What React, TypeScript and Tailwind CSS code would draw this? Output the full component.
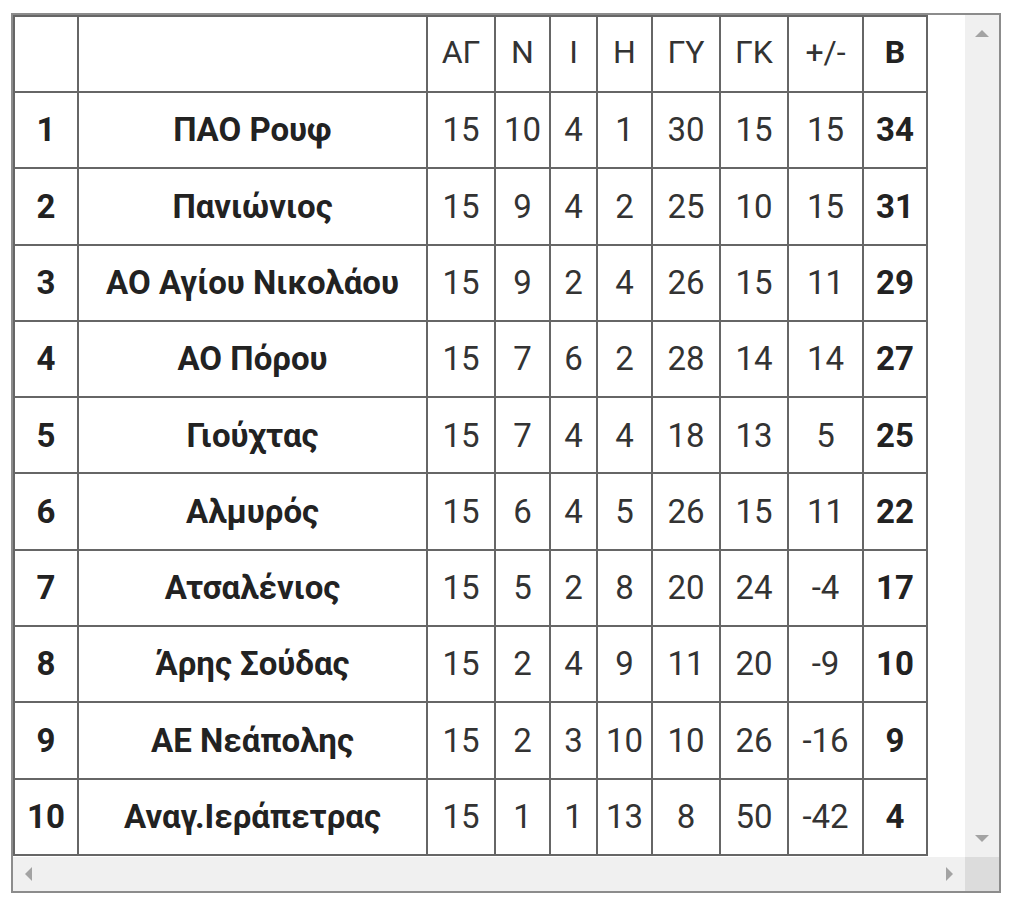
const rows = [
  [1, "ΠΑΟ Ρουφ", 15, 10, 4, 1, 30, 15, 15, 34],
  [2, "Πανιώνιος", 15, 9, 4, 2, 25, 10, 15, 31],
  [3, "ΑΟ Αγίου Νικολάου", 15, 9, 2, 4, 26, 15, 11, 29],
  [4, "ΑΟ Πόρου", 15, 7, 6, 2, 28, 14, 14, 27],
  [5, "Γιούχτας", 15, 7, 4, 4, 18, 13, 5, 25],
  [6, "Αλμυρός", 15, 6, 4, 5, 26, 15, 11, 22],
  [7, "Ατσαλένιος", 15, 5, 2, 8, 20, 24, -4, 17],
  [8, "Άρης Σούδας", 15, 2, 4, 9, 11, 20, -9, 10],
  [9, "ΑΕ Νεάπολης", 15, 2, 3, 10, 10, 26, -16, 9],
  [10, "Αναγ.Ιεράπετρας", 15, 1, 1, 13, 8, 50, -42, 4],
]

const heads = ["ΑΓ", "Ν", "Ι", "Η", "ΓΥ", "ΓΚ", "+/-"]
const widths = [64, 349, 68, 55, 47, 55, 68, 68, 75, 64]

export default function App() {
  return (
    <div className="w-[1024px] h-[906px] bg-white pt-[13px] pl-[11px]" style={{ fontFamily: "Roboto, 'Liberation Sans', sans-serif" }}>
      <div className="w-[990px] h-[880px] border-2 border-[#8c8c8c] grid grid-cols-[952px_34px] grid-rows-[842px_34px]">
        {/* content */}
        <div className="overflow-hidden bg-white">
          <table className="table-fixed border-collapse w-[914px]">
            <colgroup>
              {widths.map((w, i) => (
                <col key={i} style={{ width: w }} />
              ))}
            </colgroup>
            <thead>
              <tr className="h-[76px]">
                <th className="border-2 border-[#666]"></th>
                <th className="border-2 border-[#666]"></th>
                {heads.map((h) => (
                  <th key={h} className="border-2 border-[#666] pb-[5px] text-[32px] font-normal text-[#333] text-center">
                    {h}
                  </th>
                ))}
                <th className="border-2 border-[#666] pb-[5px] text-[32px] font-bold text-[#222] text-center">Β</th>
              </tr>
            </thead>
            <tbody>
              {rows.map((r) => (
                <tr key={r[0]} className="h-[76.3px]">
                  <td className="border-2 border-[#666] text-center text-[33px] font-bold text-[#222]">{r[0]}</td>
                  <td className="border-2 border-[#666] text-center text-[33px] font-bold text-[#222] whitespace-nowrap">{r[1]}</td>
                  {r.slice(2, 9).map((v, i) => (
                    <td key={i} className="border-2 border-[#666] text-center text-[33px] text-[#333]">
                      {v}
                    </td>
                  ))}
                  <td className="border-2 border-[#666] text-center text-[33px] font-bold text-[#222]">{r[9]}</td>
                </tr>
              ))}
            </tbody>
          </table>
        </div>
        {/* vertical scrollbar */}
        <div className="bg-[#f0f0f0] flex flex-col items-center justify-between py-[15px]">
          <div className="w-0 h-0 border-l-[7px] border-r-[7px] border-b-[7px] border-l-transparent border-r-transparent border-b-[#a3a3a3]" />
          <div className="w-0 h-0 border-l-[7px] border-r-[7px] border-t-[7px] border-l-transparent border-r-transparent border-t-[#a3a3a3]" />
        </div>
        {/* horizontal scrollbar */}
        <div className="bg-[#f0f0f0] flex items-center justify-between px-[12px]">
          <div className="w-0 h-0 border-t-[7px] border-b-[7px] border-r-[7px] border-t-transparent border-b-transparent border-r-[#a3a3a3]" />
          <div className="w-0 h-0 border-t-[7px] border-b-[7px] border-l-[7px] border-t-transparent border-b-transparent border-l-[#a3a3a3]" />
        </div>
        <div className="bg-[#dcdcdc]" />
      </div>
    </div>
  )
}
